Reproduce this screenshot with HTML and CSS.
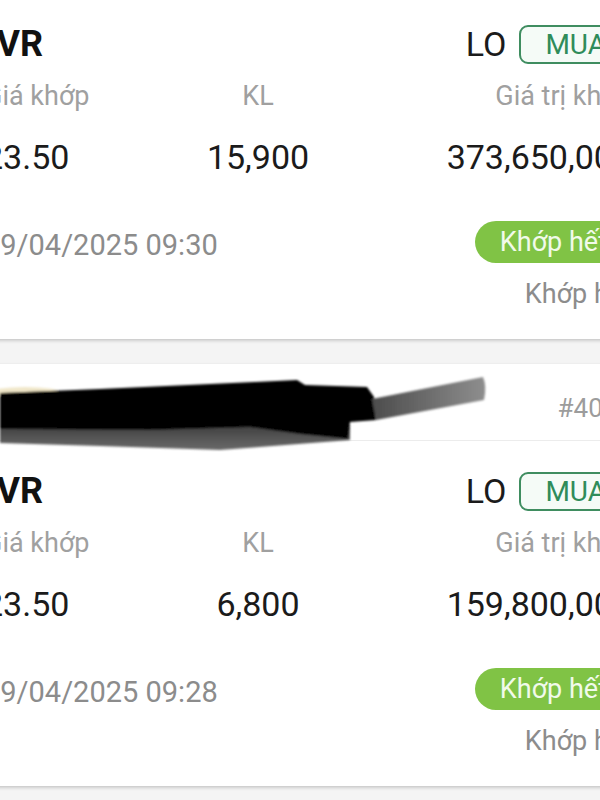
FILE: index.html
```html
<!DOCTYPE html>
<html lang="vi">
<head>
    <meta charset="UTF-8">
    <meta name="viewport" content="width=device-width, initial-scale=1.0">
    <title>Sổ lệnh</title>
    <link rel="stylesheet" href="styles.css">
</head>
<body>
    <div class="screen">
        <!-- Lệnh 1 -->
        <div class="order">
            <div class="order-head">
                <span class="order-no">#4013</span>
            </div>
            <div class="order-body">
                <div class="row-top">
                    <span class="ticker">GVR</span>
                    <div class="type">
                        <span class="price-type">LO</span>
                        <span class="side">MUA</span>
                    </div>
                </div>
                <div class="cols labels">
                    <span>Giá khớp</span>
                    <span class="mid">KL</span>
                    <span class="end">Giá trị khớp</span>
                </div>
                <div class="cols values">
                    <span>23.50</span>
                    <span class="mid">15,900</span>
                    <span class="end">373,650,000</span>
                </div>
                <div class="row-status">
                    <span class="time">29/04/2025 09:30</span>
                    <span class="pill">Khớp hết</span>
                </div>
                <div class="row-note">
                    <span>Khớp hết</span>
                </div>
            </div>
        </div>

        <!-- Lệnh 2 -->
        <div class="order">
            <div class="order-head">
                <svg class="redact" width="490" height="95" viewBox="0 0 490 95">
                    <defs>
                        <filter id="soft"><feGaussianBlur stdDeviation="1.3"/></filter>
                        <linearGradient id="tail" x1="0" x2="1" y1="0" y2="0">
                            <stop offset="0" stop-color="#4c4c4c"/>
                            <stop offset="1" stop-color="#8e8e8e"/>
                        </linearGradient>
                        <linearGradient id="under" x1="0" x2="0" y1="0" y2="1">
                            <stop offset="0" stop-color="#3a3a3a"/>
                            <stop offset="1" stop-color="#6a6a6a"/>
                        </linearGradient>
                    </defs>
                    <g filter="url(#soft)">
                        <ellipse cx="25" cy="28" rx="34" ry="5" fill="#e9ddb2" opacity="0.7"/>
                        <path d="M0 58 L350 62 L350 76 L220 86 L100 82 L0 79 Z" fill="url(#under)"/>
                        <path d="M0 29 L100 25 L297 16 L305 21 L367 23 L374 33 L376 56 L350 58 L348 75 L300 70 L250 63 L150 66 L0 65 Z" fill="#050505"/>
                        <path d="M372 35 L483 13 Q487 22 484 36 L376 56 Z" fill="url(#tail)"/>
                    </g>
                </svg>
                <span class="order-no">#4012</span>
            </div>
            <div class="order-body">
                <div class="row-top">
                    <span class="ticker">GVR</span>
                    <div class="type">
                        <span class="price-type">LO</span>
                        <span class="side">MUA</span>
                    </div>
                </div>
                <div class="cols labels">
                    <span>Giá khớp</span>
                    <span class="mid">KL</span>
                    <span class="end">Giá trị khớp</span>
                </div>
                <div class="cols values">
                    <span>23.50</span>
                    <span class="mid">6,800</span>
                    <span class="end">159,800,000</span>
                </div>
                <div class="row-status">
                    <span class="time">29/04/2025 09:28</span>
                    <span class="pill">Khớp hết</span>
                </div>
                <div class="row-note">
                    <span>Khớp hết</span>
                </div>
            </div>
        </div>
    </div>
</body>
</html>
```

FILE: styles.css
```css
body {
    margin: 0;
    overflow: hidden;
    background-color: #f4f4f4;
    font-family: Roboto, "Noto Sans", Arial, sans-serif;
    color: #1b1b1b;
}
.screen {
    width: 680px;
    margin-top: -83px;
    margin-left: -32px;
}
.order {
    background-color: #fff;
    margin-bottom: 25px;
    box-shadow: 0 2px 3px rgba(0, 0, 0, 0.16), 0 0 2px rgba(0, 0, 0, 0.06);
}
.order-head {
    position: relative;
    height: 77px;
    padding: 12px 16px 0;
    box-sizing: border-box;
    border-bottom: 1px solid #ececec;
    display: flex;
    align-items: center;
    justify-content: flex-end;
}
.order-no {
    font-size: 26px;
    color: #9c9c9c;
}
.redact {
    position: absolute;
    left: 32px;
    top: 0;
    overflow: visible;
}
.order-body {
    padding: 25px 16px 30px;
}
.row-top {
    height: 44px;
    padding-top: 3px;
    display: flex;
    align-items: center;
    justify-content: space-between;
}
.ticker {
    font-size: 36px;
    font-weight: bold;
    color: #111;
    margin-left: -12px;
}
.type {
    display: flex;
    align-items: center;
    gap: 13px;
}
.price-type {
    font-size: 34px;
    color: #1b1b1b;
}
.side {
    font-size: 28px;
    color: #2f8c5a;
    background-color: #f5fbf7;
    border: 2px solid #3f8d60;
    border-radius: 9px;
    height: 35px;
    line-height: 35px;
    padding: 0 24px;
}
.cols {
    display: grid;
    grid-template-columns: 200px 148px 1fr;
}
.cols .mid {
    text-align: center;
}
.cols .end {
    text-align: right;
}
.labels {
    margin-top: 15px;
    font-size: 27px;
    line-height: 30px;
    color: #a0a0a0;
}
.values {
    margin-top: 26px;
    font-size: 34px;
    line-height: 40px;
}
.row-status {
    margin-top: 43px;
    height: 44px;
    display: flex;
    align-items: center;
    justify-content: space-between;
}
.time {
    font-size: 29px;
    color: #8c8c8c;
    padding-top: 6px;
}
.pill {
    font-size: 27px;
    color: #f1faea;
    background-color: #80c345;
    border-radius: 21px;
    height: 42px;
    line-height: 42px;
    padding: 0 25px;
}
.row-note {
    margin-top: 15px;
    font-size: 27px;
    line-height: 30px;
    color: #8c8c8c;
    text-align: right;
}
```
